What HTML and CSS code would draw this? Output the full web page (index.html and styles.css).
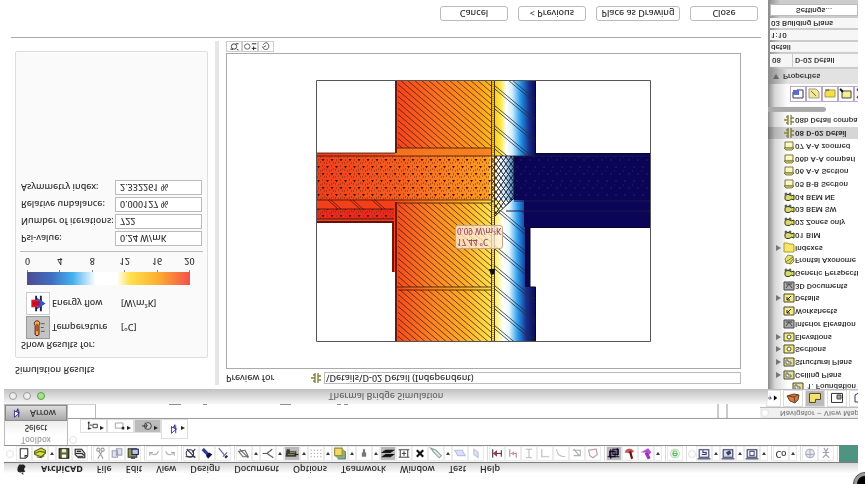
FILE: index.html
```html
<!DOCTYPE html>
<html lang="en">

<head>
    <meta charset="UTF-8">
    <meta name="viewport" content="width=device-width, initial-scale=1.0">
    <title>Thermal Bridge Simulation</title>
    <link rel="stylesheet" href="styles.css">
</head>

<body>
    <!-- Shared icons -->
    <svg class="defs" width="0" height="0" aria-hidden="true">
        <symbol id="i-new" viewBox="0 0 14 14"><path d="M3.5 2.5h5l2 2v7h-7z" fill="#fff" stroke="#333"/><path d="M8 3v2h2" fill="none" stroke="#333"/></symbol>
        <symbol id="i-open" viewBox="0 0 14 14"><path d="M2 6l6-2 4 3v3l-4 2-6-3z" fill="#d9e04a" stroke="#555b10"/><path d="M2 7l5 2 5-1M4 4l4-1 3 2" stroke="#55600c" fill="none"/></symbol>
        <symbol id="i-save" viewBox="0 0 14 14"><path d="M2.5 2.5h9v9h-9z" fill="#65652a" stroke="#111"/><path d="M5 3h4v3H5z" fill="#fff"/><path d="M5 8h4v3H5z" fill="#eee"/></symbol>
        <symbol id="i-print" viewBox="0 0 14 14"><path d="M2.5 6l3-3h6v4l-3 4h-6z" fill="#ddd" stroke="#222"/><path d="M3 7h6l2-2M5 4h5M4 9h4" stroke="#222" fill="none"/></symbol>
        <symbol id="i-cut" viewBox="0 0 14 14"><path d="M4 2l4 7M9 2L5 9" stroke="#999" fill="none"/><circle cx="4.500" cy="10.500" r="1.500" fill="none" stroke="#999"/><circle cx="8.500" cy="10.500" r="1.500" fill="none" stroke="#999"/></symbol>
        <symbol id="i-copy" viewBox="0 0 14 14"><path d="M2.500 3.500h5v6h-5zM6.500 5.500h5v6h-5z" fill="#dfe2ee" stroke="#9a9fb5"/></symbol>
        <symbol id="i-paste" viewBox="0 0 14 14"><path d="M2.500 3.500h8v8h-8z" fill="#8e9a3a" stroke="#334"/><path d="M6 6h6v5H6z" fill="#b9c8e8" stroke="#225"/><path d="M5 2h4v2H5z" fill="#444"/></symbol>
        <symbol id="i-undo" viewBox="0 0 14 14"><path d="M3 5v3h3M3 8c2-3 7-3 8 1" stroke="#aaa" fill="none"/></symbol>
        <symbol id="i-redo" viewBox="0 0 14 14"><path d="M11 5v3H8M11 8C9 5 4 5 3 9" stroke="#aaa" fill="none"/></symbol>
        <symbol id="i-find" viewBox="0 0 14 14"><circle cx="6" cy="7" r="3.500" fill="none" stroke="#335"/><path d="M3 11l8-8M2 4h9M8 8l3 3" stroke="#223" fill="none"/></symbol>
        <symbol id="i-pick" viewBox="0 0 14 14"><path d="M3 11l5-5" stroke="#2b3b9a" stroke-width="3"/><path d="M8 2l4 4-3 2-3-3z" fill="#101040"/></symbol>
        <symbol id="i-inject" viewBox="0 0 14 14"><path d="M3 12l5-6M7 4l4 4" stroke="#55608f" fill="none"/><path d="M9 3l2 2" stroke="#223" stroke-width="2"/></symbol>
        <symbol id="i-plane" viewBox="0 0 14 14"><path d="M2 9l4-5h5l-3 6zM3 11l8-8" fill="none" stroke="#666"/></symbol>
        <symbol id="i-angle" viewBox="0 0 14 14"><path d="M2 7h4l6-4M6 7l5 4" stroke="#555" fill="none"/></symbol>
        <symbol id="i-layers" viewBox="0 0 14 14"><path d="M1 4h10v5H5v2H2z" fill="#3b3b30"/><path d="M3 6h6M5 8h5" stroke="#8c8c60"/><path d="M10 6h3" stroke="#111"/></symbol>
        <symbol id="i-grid" viewBox="0 0 14 14"><path d="M2 4h10M2 7h10M2 10h10" stroke="#999" stroke-dasharray="1 2"/></symbol>
        <symbol id="i-cube" viewBox="0 0 14 14"><path d="M2 5l3-3h7v7l-3 3H2z" fill="#8fb36b"/><path d="M2 5h7v7H2z" fill="#f0d96a" stroke="#9c8a3a"/><path d="M5 2h7v7" fill="none" stroke="#4b7dab"/></symbol>
        <symbol id="i-pin" viewBox="0 0 14 14"><path d="M5 4h4v4H8v3H6V8H5z" fill="#777"/></symbol>
        <symbol id="i-stack" viewBox="0 0 14 14"><path d="M2 4h7l3 2H5zM2 8h7l3 2H5z" fill="#111" stroke="#111"/></symbol>
        <symbol id="i-box" viewBox="0 0 14 14"><path d="M2 3.500h10M2 10.500h10M3.500 3v8M10.500 3v8M7 5v4M5 7h4" stroke="#444" fill="none"/></symbol>
        <symbol id="i-x" viewBox="0 0 14 14"><path d="M4 4l6 6M10 4l-6 6" stroke="#111" stroke-width="2"/></symbol>
        <symbol id="i-pen" viewBox="0 0 14 14"><path d="M2 12l3-4 5-5 2 2-5 5z" fill="#e7efe7" stroke="#8b9f9b"/></symbol>
        <symbol id="i-para" viewBox="0 0 14 14"><path d="M2 10l3-5h7l-3 5z" fill="#dce1f6" stroke="#b6bfe3"/></symbol>
        <symbol id="i-slab" viewBox="0 0 14 14"><path d="M5 11V6l4-3v5z" fill="#dce1f6" stroke="#b6bfe3"/></symbol>
        <symbol id="i-split" viewBox="0 0 14 14"><path d="M3 3v8M6 7h5M11 4v6" stroke="#334" fill="none"/><path d="M3 7l4-3v6z" fill="#a34"/></symbol>
        <symbol id="i-adjust" viewBox="0 0 14 14"><path d="M4 11V4M5 7h5M10 3v5" stroke="#a88" fill="none"/><path d="M5 7l3-2v4z" fill="#c99"/></symbol>
        <symbol id="i-beam" viewBox="0 0 14 14"><path d="M4 3h6M4 11h6M7 3v8" stroke="#bbb" fill="none"/></symbol>
        <symbol id="i-ell" viewBox="0 0 14 14"><path d="M4 11V4h7" stroke="#bbb" fill="none"/></symbol>
        <symbol id="i-curve" viewBox="0 0 14 14"><path d="M3 11c0-5 3-7 8-7" stroke="#bbb" fill="none"/></symbol>
        <symbol id="i-flag" viewBox="0 0 14 14"><path d="M3 10h7V5H4M9 5L4 11" stroke="#aaa" fill="none"/></symbol>
        <symbol id="i-poly" viewBox="0 0 14 14"><path d="M3 10l1-5 3-2 4 3-1 5z" stroke="#b99" fill="none"/></symbol>
        <symbol id="i-group" viewBox="0 0 14 14"><path d="M3 4h5v5H3zM6 6h5v5H6z" fill="#99a" stroke="#102"/><path d="M1 4h11M4 2v9M10 5v7" stroke="#102"/></symbol>
        <symbol id="i-wand" viewBox="0 0 14 14"><path d="M2 8c2 5 6 4 9 1L8 7z" fill="#c05a5a"/><path d="M7 9l2-7" stroke="#611" stroke-width="2"/></symbol>
        <symbol id="i-trace" viewBox="0 0 14 14"><path d="M2 8h7V5l3 3-3 4z" fill="#b44ad8"/><path d="M7 8l3-6" stroke="#93b" stroke-width="3"/></symbol>
        <symbol id="i-eco" viewBox="0 0 14 14"><circle cx="7" cy="7" r="4" fill="none" stroke="#b7dcb0"/><path d="M5 7h4c0-3-4-3-4 0s3 3 4 1" fill="none" stroke="#58b558"/></symbol>
        <symbol id="i-view" viewBox="0 0 14 14"><path d="M2.500 3.500h9v7h-9z" fill="#eef" stroke="#336"/><path d="M1 2h12" stroke="#225"/><path d="M5 6h4v2H6v2" fill="none" stroke="#336"/></symbol>
        <symbol id="i-view3d" viewBox="0 0 14 14"><path d="M2.500 3.500h9v7h-9z" fill="#dde" stroke="#336"/><path d="M1 2h12" stroke="#225"/><path d="M5 8l2-3 3 2-1 3z" fill="#345"/></symbol>
        <symbol id="i-layout" viewBox="0 0 14 14"><path d="M2.500 3.500h9v7h-9z" fill="#eef" stroke="#336"/><path d="M1 2h12" stroke="#225"/><path d="M5 5h4v4H5z" fill="#fff" stroke="#556"/></symbol>
        <symbol id="i-globe" viewBox="0 0 14 14"><circle cx="7" cy="7" r="4" fill="#e7e7ef" stroke="#aab"/><path d="M3 6h8M7 3v8" stroke="#aab"/></symbol>
        <symbol id="i-walk" viewBox="0 0 14 14"><path d="M4 3l3 3 3-3M7 5v4M4 8h6M5 12l2-3 2 3" stroke="#99a" fill="none"/></symbol>
        <symbol id="i-arrow" viewBox="0 0 14 14"><path d="M4 2l6 5-3 1 1 4-2-4-2 2z" fill="#fff" stroke="#228"/><path d="M9 2v9" stroke="#228"/></symbol>
        <symbol id="i-node" viewBox="0 0 14 14"><path d="M2 11V4h3M3 8h3M7 5h5v4H7z" stroke="#222" fill="none"/><path d="M1 3h2v2H1zM1 10h2v2H1z" fill="#222"/></symbol>
        <symbol id="i-rect" viewBox="0 0 14 14"><path d="M1.500 4.500h9v6h-9z" stroke="#999" fill="none"/><path d="M9 3h3v3H9z" fill="#222"/></symbol>
        <symbol id="i-loop" viewBox="0 0 14 14"><circle cx="8" cy="7" r="4" fill="#ccc" stroke="#333"/><path d="M1 7h6l-2-3M8 7l-3 3" stroke="#222" fill="none"/></symbol>
        <!-- navigator icons -->
        <symbol id="n-fold" viewBox="0 0 12 12"><path d="M1 2h10v8H1z" fill="#e5df9a" stroke="#4b4b28"/><path d="M3 8V4h5v2H5v2z" fill="#fff" stroke="#666"/></symbol>
        <symbol id="n-sec" viewBox="0 0 12 12"><path d="M1 2h10v8H1z" fill="#f3ec86" stroke="#4b4b28"/><circle cx="6" cy="6" r="2" fill="#fff" stroke="#554"/></symbol>
        <symbol id="n-int" viewBox="0 0 12 12"><path d="M1 2h10v8H1z" fill="#aaa" stroke="#444"/><path d="M3 4l3 4 3-4M3 8h6" stroke="#444" fill="none"/></symbol>
        <symbol id="n-work" viewBox="0 0 12 12"><path d="M1 2h10v8H1z" fill="#f3ec86" stroke="#4b4b28"/><path d="M4 4l4 4M4 7V4h3" stroke="#222" fill="none"/></symbol>
        <symbol id="n-cam" viewBox="0 0 12 12"><path d="M2 4c0-2 6-2 6 0l3-1v5L8 7c0 2-6 2-6 0z" fill="#d9d96c" stroke="#333a10"/><circle cx="3" cy="9" r="1" fill="#eee" stroke="#333"/><circle cx="7" cy="9" r="1" fill="#eee" stroke="#333"/></symbol>
        <symbol id="n-axo" viewBox="0 0 12 12"><path d="M3 3l5-1 3 3-1 5-5 1-3-4z" fill="#e7e46c" stroke="#8a8a40"/><path d="M3 4l7 5M6 2l4 5" stroke="#77743a"/></symbol>
        <symbol id="n-idx" viewBox="0 0 12 12"><path d="M1 2h10v7l-1 1H6l-1 1H1z" fill="#f7e66e" stroke="#b19c28"/></symbol>
        <symbol id="n-board" viewBox="0 0 12 12"><path d="M2 4h8v6H2z" fill="#fbf8c8" stroke="#77743a"/><path d="M1 4l2-2h6l2 2z" fill="#e8e27a" stroke="#77743a"/></symbol>
        <symbol id="n-det" viewBox="0 0 12 12"><path d="M5 1v10M8 1v10" stroke="#55550e"/><path d="M1 6h4M5 9H3M5 3H3M8 4h3M8 8h3" stroke="#85802a" fill="none" stroke-width="1.500"/></symbol>
    </svg>

    <!-- The whole desktop is shown turned over top to bottom -->
    <div class="screen">
        <header class="menubar">
            <svg class="apple" viewBox="0 0 12 12"><path d="M6 3.200C5 2.600 1.500 2.400 1.500 6c0 3 2 5.500 3.200 5.500.6 0 .8-.4 1.500-.4s1 .4 1.600.4c1 0 2-1.500 2.600-2.800C8.500 8 8.300 5 10.200 4.200 9 2.500 7 2.800 6 3.200zM6 2.800C6 1.500 7 .5 8.200.4 8.300 1.800 7.200 2.800 6 2.800z" fill="#222"/></svg>
            <nav class="menu">
                <a href="#" class="app-name">ArchiCAD</a>
                <a href="#">File</a>
                <a href="#">Edit</a>
                <a href="#">View</a>
                <a href="#">Design</a>
                <a href="#">Document</a>
                <a href="#">Options</a>
                <a href="#">Teamwork</a>
                <a href="#">Window</a>
                <a href="#">Test</a>
                <a href="#">Help</a>
            </nav>
        </header>

        <div class="toolbar">
            <i class="grip"></i>
            <div class="group">
                <button><svg><use href="#i-new"/></svg></button>
                <button><svg><use href="#i-open"/></svg></button><button class="more"></button>
                <button><svg><use href="#i-save"/></svg></button>
                <button><svg><use href="#i-print"/></svg></button>
            </div>
            <div class="group">
                <button><svg><use href="#i-cut"/></svg></button>
                <button><svg><use href="#i-copy"/></svg></button>
                <button><svg><use href="#i-paste"/></svg></button>
            </div>
            <div class="group">
                <button><svg><use href="#i-undo"/></svg></button>
                <button><svg><use href="#i-redo"/></svg></button>
            </div>
            <div class="group">
                <button><svg><use href="#i-find"/></svg></button>
                <button><svg><use href="#i-pick"/></svg></button>
                <button><svg><use href="#i-inject"/></svg></button>
            </div>
            <div class="group">
                <button><svg><use href="#i-plane"/></svg></button><button class="more"></button>
                <button><svg><use href="#i-angle"/></svg></button><button class="more"></button>
                <button class="on"><svg><use href="#i-layers"/></svg></button><button class="more"></button>
                <button><svg><use href="#i-grid"/></svg></button><button class="more"></button>
                <button><svg><use href="#i-cube"/></svg></button><button class="more"></button>
                <button><svg><use href="#i-pin"/></svg></button><button class="more"></button>
                <button class="on"><svg><use href="#i-stack"/></svg></button>
                <button><svg><use href="#i-box"/></svg></button>
                <button><svg><use href="#i-x"/></svg></button>
                <button><svg><use href="#i-pen"/></svg></button><button class="more"></button>
                <button><svg><use href="#i-para"/></svg></button>
                <button><svg><use href="#i-slab"/></svg></button>
            </div>
            <div class="group">
                <button><svg><use href="#i-split"/></svg></button>
                <button><svg><use href="#i-adjust"/></svg></button>
                <button><svg><use href="#i-beam"/></svg></button>
                <button><svg><use href="#i-ell"/></svg></button>
                <button><svg><use href="#i-curve"/></svg></button>
                <button><svg><use href="#i-flag"/></svg></button>
                <button><svg><use href="#i-poly"/></svg></button>
            </div>
            <div class="group">
                <button class="on"><svg><use href="#i-group"/></svg></button>
                <button><svg><use href="#i-wand"/></svg></button>
                <button><svg><use href="#i-trace"/></svg></button><button class="more"></button>
            </div>
            <div class="group">
                <button><svg><use href="#i-eco"/></svg></button>
            </div>
            <i class="grip"></i>
            <div class="group">
                <button><svg><use href="#i-view"/></svg></button><button class="more"></button>
                <button><svg><use href="#i-view3d"/></svg></button><button class="more"></button>
                <button><svg><use href="#i-layout"/></svg></button><button class="more"></button>
            </div>
            <div class="group">
                <button class="go">Co</button><button class="more"></button>
            </div>
            <div class="group">
                <button><svg><use href="#i-globe"/></svg></button>
                <button><svg><use href="#i-walk"/></svg></button>
            </div>
            <div class="wallpaper"></div>
        </div>

        <main class="desktop">
            <div class="palettes">
                <section class="toolbox">
                    <h2>Toolbox</h2>
                    <button class="tool">Select</button>
                    <button class="tool active"><svg><use href="#i-arrow"/></svg>Arrow</button>
                </section>
                <div class="document">
                    <div class="infobox">
                        <i class="grip"></i>
                        <div class="methods">
                            <button><svg><use href="#i-node"/></svg></button>
                            <button><svg><use href="#i-rect"/></svg></button>
                            <button class="on"><svg><use href="#i-loop"/></svg></button>
                            <button class="current"><svg><use href="#i-arrow"/></svg></button>
                        </div>
                    </div>
                    <div class="sheet">
                        <span class="sheet-tab"></span>
                        <span class="sheet-scroll"></span>
                    </div>
                </div>
            </div>

            <section class="dialog">
                <header class="titlebar">
                    <div class="lights"><i></i><i></i><i class="green"></i></div>
                    <h1>Thermal Bridge Simulation</h1>
                </header>

                <div class="dialog-body">
                    <div class="results">
                        <h2>Simulation Results</h2>
                        <div class="panel">
                            <p>Show Results for:</p>
                            <div class="mode">
                                <button id="temperature" class="pressed">
                                    <svg viewBox="0 0 22 22"><path d="M8 4c0-2 4-2 4 0v9c2 3 0 5-2 5s-4-2-2-5z" fill="#f3b04a" stroke="#411"/><path d="M10 7v8" stroke="#b5501c" stroke-width="2"/><path d="M14 7h4M14 11h3M14 15h4" stroke="#555"/></svg>
                                </button>
                                <label for="temperature">Temperature</label>
                                <span>[°C]</span>
                            </div>
                            <div class="mode">
                                <button id="energy">
                                    <svg viewBox="0 0 22 22"><path d="M9 3v16M14 3v16" stroke="#224" stroke-width="2"/><path d="M4 7h6v8H4z" fill="#e01830"/><path d="M10 5l9 6-9 6z" fill="#3a4fc0"/><path d="M5 11h8" stroke="#c01028" stroke-width="4"/></svg>
                                </button>
                                <label for="energy">Energy flow</label>
                                <span>[W/m²K]</span>
                            </div>
                            <div class="scale"></div>
                            <ul class="ticks">
                                <li>0</li>
                                <li>4</li>
                                <li>8</li>
                                <li>12</li>
                                <li>16</li>
                                <li>20</li>
                            </ul>
                            <div class="values">
                                <label for="psi">Psi-value:</label>
                                <input id="psi" type="text" value="0.24 W/mK">
                                <label for="iterations">Number of iterations:</label>
                                <input id="iterations" type="text" value="722">
                                <label for="unbalance">Relative unbalance:</label>
                                <input id="unbalance" type="text" value="0.000127 %">
                                <label for="asymmetry">Asymmetry index:</label>
                                <input id="asymmetry" type="text" value="2.332261 %">
                            </div>
                        </div>
                    </div>

                    <div class="splitter"></div>

                    <div class="preview">
                        <div class="source">
                            <label for="source">Preview for</label>
                            <svg><use href="#n-det"/></svg>
                            <input id="source" type="text" value="\Details\D-02 Detail (Independent)">
                        </div>
                        <div class="canvas">
                            <div class="drawing">
                                <svg width="335" height="262" viewBox="0 0 335 262">
                                    <defs>
                                        <linearGradient id="upper" gradientUnits="userSpaceOnUse" x1="79" y1="0" x2="220" y2="0">
                                            <stop offset="0" stop-color="#f5401c"/><stop offset=".3" stop-color="#fc7220"/><stop offset=".6" stop-color="#fba01e"/><stop offset=".7" stop-color="#fdc41c"/><stop offset=".75" stop-color="#ffe84a"/><stop offset=".79" stop-color="#fff"/><stop offset=".83" stop-color="#d2f0ff"/><stop offset=".89" stop-color="#2596e8"/><stop offset=".95" stop-color="#17308c"/><stop offset="1" stop-color="#0c0850"/>
                                        </linearGradient>
                                        <linearGradient id="lower" gradientUnits="userSpaceOnUse" x1="79" y1="0" x2="220" y2="0">
                                            <stop offset="0" stop-color="#f4481c"/><stop offset=".25" stop-color="#fb8024"/><stop offset=".5" stop-color="#fbb028"/><stop offset=".66" stop-color="#fbdd48"/><stop offset=".72" stop-color="#fdf07c"/><stop offset=".77" stop-color="#fff"/><stop offset=".81" stop-color="#e4f8ff"/><stop offset=".87" stop-color="#2a9cec"/><stop offset=".93" stop-color="#17308c"/><stop offset="1" stop-color="#0c0850"/>
                                        </linearGradient>
                                        <linearGradient id="slab" gradientUnits="userSpaceOnUse" x1="0" y1="0" x2="215" y2="0">
                                            <stop offset="0" stop-color="#ee3d1e"/><stop offset=".35" stop-color="#f65a20"/><stop offset=".65" stop-color="#fb8622"/><stop offset=".8" stop-color="#fa9c20"/><stop offset=".82" stop-color="#ffe06a"/><stop offset=".85" stop-color="#fff"/><stop offset=".88" stop-color="#cdeafa"/><stop offset=".92" stop-color="#3a7ab8"/><stop offset="1" stop-color="#0b0650"/>
                                        </linearGradient>
                                        <pattern id="brick" width="7" height="6" patternUnits="userSpaceOnUse"><path d="M-1-.860L8 6.860M-8-.860L1 6.860M6-.860L15 6.860" stroke="#4a1a08" stroke-width=".9" opacity=".85"/></pattern>
                                        <pattern id="wool" width="24" height="20" patternUnits="userSpaceOnUse"><path d="M-24-20L48 40M-20-20L52 40M-44-20L28 40" stroke="#222840" stroke-width=".8"/></pattern>
                                        <pattern id="concrete" width="9" height="14" patternUnits="userSpaceOnUse"><path d="M1 2h3L2.500 4.500zM5.500 9h3L7 11.500z" fill="#411208"/><path d="M6 2h1M8 5h1M4 7h1M1 6h1M2 10h1M4 12h1M8 13h1M1 13h1M6 6h1" stroke="#7a2a0a"/></pattern>
                                        <pattern id="dark" width="9" height="14" patternUnits="userSpaceOnUse"><path d="M2 3h2M6 10h2M1 7h1" stroke="#23206e"/></pattern>
                                        <pattern id="mesh" width="5" height="7" patternUnits="userSpaceOnUse"><path d="M0 0l5 7M5 0L0 7" stroke="#16182c"/></pattern>
                                    </defs>
                                    <g transform="translate(0 262) scale(1 -1)">
                                        <path d="M0 0h335v262H0z" fill="#fff"/>
                                        <!-- wall above and below the slab -->
                                        <path d="M79 0h141v78H79z" fill="url(#upper)"/>
                                        <path d="M76 118h138v89h6v55H79v-70h-3z" fill="url(#lower)"/>
                                        <path d="M82 0h94v68H82zM82 123h94v84H82zM82 210h94v52H82z" fill="url(#brick)"/>
                                        <path d="M179 0h41v76h-41zM179 131h33v76h-33zM179 207h41v55h-41z" fill="url(#wool)"/>
                                        <!-- floor slab -->
                                        <path d="M0 73h179v47H0z" fill="url(#slab)"/>
                                        <path d="M79 68h97v8H79z" fill="#f57a22" opacity=".8"/>
                                        <path d="M0 76h175v44H0z" fill="url(#concrete)"/>
                                        <path d="M0 120h79v22H0z" fill="#f4401a"/>
                                        <path d="M0 129h78v10H0z" fill="#ea2a1c"/>
                                        <path d="M0 129h78v10H0z" fill="url(#concrete)"/>
                                        <path d="M12 120l10 9M15 120l10 9M34 120l10 9M37 120l10 9M56 120l10 9M59 120l10 9" stroke="#5a1008" stroke-width=".8"/>
                                        <!-- cold side -->
                                        <path d="M175 76h40v44h-40z" fill="url(#slab)"/>
                                        <path d="M220 73h115v74H208v-27h-10V76h22z" fill="#0b0558"/>
                                        <path d="M198 76h137v42H198z" fill="url(#dark)"/>
                                        <path d="M198 121h137M190 131h145M215 76h120" stroke="#191a4c"/>
                                        <path d="M209 147h5v60h-5z" fill="#0b0648"/>
                                        <path d="M175 76h23v42l-20 18v-14h-3z" fill="url(#mesh)"/>
                                        <path d="M198 76v42l-20 19" fill="none" stroke="#111433"/>
                                        <!-- outlines -->
                                        <path d="M0 73h79M0 76h215M79 68h97M79 207h97M82 210h94M0 120h176M79 123h97M0 129h78M0 139h78" fill="none" stroke="#3b1408" stroke-width=".8"/>
                                        <path d="M0 142h78" stroke="#611010" stroke-width="2"/>
                                        <path d="M80 0v73M77 142v50M80 122v140" stroke="#701808" stroke-width="2"/>
                                        <path d="M175.500 0v262M178.500 0v262" stroke="#4c3510"/>
                                        <path d="M177 0v262" stroke="#8b6a28" stroke-dasharray="1 1"/>
                                        <path d="M219.500 0v73.500h115M214 147.500h121M214 147v60h5.500v55" fill="none" stroke="#080530"/>
                                        <path d="M.5.500h334v261H.5z" fill="none" stroke="#555"/>
                                        <path d="M173 189h6l-1 5-3 1z" fill="#111"/>
                                    </g>
                                </svg>
                                <div class="tooltip">17.44 °C<br>0.09 W/m²K</div>
                            </div>
                        </div>
                        <div class="zoom">
                            <button><svg viewBox="0 0 14 10"><circle cx="7" cy="5" r="3" fill="none" stroke="#333"/><path d="M3 2h3M9 8h3M10 2l2-1" stroke="#222"/></svg></button>
                            <button><svg viewBox="0 0 14 10"><circle cx="4" cy="5" r="3" fill="none" stroke="#555"/><path d="M9 3h5M11 1v4M9 8h5" stroke="#111"/></svg></button>
                            <button><svg viewBox="0 0 14 10"><path d="M3 5c1-5 8-4 7 1s-5 3-6 1M7 6l-3-2" fill="none" stroke="#444"/></svg></button>
                        </div>
                    </div>
                </div>

                <footer class="actions">
                    <button>Cancel</button>
                    <button>&lt; Previous</button>
                    <button class="wide">Place as Drawing</button>
                    <button>Close</button>
                </footer>
            </section>

            <aside class="navigator">
                <h2><i class="grip"></i>Navigator – View Map</h2>
                <div class="maps">
                    <button class="small"><svg viewBox="0 0 14 14"><path d="M1 7h4M3 5l2 2-2 2" fill="none" stroke="#336"/><path d="M8 4l4 3-4 3z"/></svg></button>
                    <button><svg viewBox="0 0 14 14"><path d="M1 9l3-5 5-2 3 3 1 5-5 1z" fill="#dc7a3c" stroke="#542"/><path d="M2 9l6-1 4 2M8 8l1-5" stroke="#733" fill="none"/></svg></button>
                    <button class="on"><svg viewBox="0 0 14 14"><path d="M1.500 11.500h11v-6h-5v-3h-6z" fill="#f5e269" stroke="#543"/></svg></button>
                    <button><svg viewBox="0 0 14 14"><path d="M1.500 2.500h11v9h-11z" fill="#fff" stroke="#333"/><path d="M7 6h4v4H7z" fill="#9ab08a" stroke="#444"/></svg></button>
                    <button><svg viewBox="0 0 14 14"><path d="M3 3v7l4 2 5-2V3z" fill="#fff" stroke="#336"/></svg></button>
                </div>
                <div class="clipped"><svg><use href="#n-fold"/></svg>1. Foundation</div>
                <ul class="tree">
                    <li class="parent"><svg><use href="#n-fold"/></svg>Ceiling Plans</li>
                    <li class="parent"><svg><use href="#n-fold"/></svg>Structural Plans</li>
                    <li class="parent"><svg><use href="#n-sec"/></svg>Sections</li>
                    <li class="parent"><svg><use href="#n-sec"/></svg>Elevations</li>
                    <li><svg><use href="#n-int"/></svg>Interior Elevation</li>
                    <li><svg><use href="#n-work"/></svg>Worksheets</li>
                    <li class="parent"><svg><use href="#n-work"/></svg>Details</li>
                    <li><svg><use href="#n-int"/></svg>3D Documents</li>
                    <li><svg><use href="#n-cam"/></svg>Generic Perspecti</li>
                    <li><svg><use href="#n-axo"/></svg>Frontal Axonome</li>
                    <li class="parent"><svg><use href="#n-idx"/></svg>Indexes</li>
                    <li><svg><use href="#n-cam"/></svg>01 BIM</li>
                    <li><svg><use href="#n-cam"/></svg>02 Zones only</li>
                    <li><svg><use href="#n-cam"/></svg>03 BEM SW</li>
                    <li><svg><use href="#n-cam"/></svg>04 BEM NE</li>
                    <li><svg><use href="#n-board"/></svg>05 B-B Section</li>
                    <li><svg><use href="#n-board"/></svg>06 A-A Section</li>
                    <li><svg><use href="#n-board"/></svg>06b A-A compari</li>
                    <li><svg><use href="#n-board"/></svg>07 A-A zoomed</li>
                    <li class="selected"><svg><use href="#n-det"/></svg>08 D-02 Detail</li>
                    <li><svg><use href="#n-det"/></svg>08b Detail compa</li>
                </ul>
                <div class="scrollbar"></div>
                <div class="commands">
                    <button><svg viewBox="0 0 14 14"><path d="M2 3h10v8H6V9H2z" fill="#fff" stroke="#334"/><path d="M2 6h6v5H2z" fill="#5a6bd0"/></svg></button>
                    <button><svg viewBox="0 0 14 14"><path d="M2 3h10v6l-3 3H2z" fill="#f5ea8a" stroke="#999"/><path d="M4 10l5-5" stroke="#666"/></svg></button>
                    <button><svg viewBox="0 0 14 14"><path d="M2 4h10v7H5l-3-2z" fill="#f6df4c" stroke="#a93"/><path d="M2 11h4" stroke="#333"/></svg></button>
                    <button><svg viewBox="0 0 14 14"><path d="M3 3h9v7H3z" fill="#f5ef9a" stroke="#443"/><path d="M1 12l3-3" stroke="#111" stroke-width="2"/></svg></button>
                    <button><svg viewBox="0 0 14 14"><path d="M2 3l9 9M11 3l-9 9" stroke="#b01828" stroke-width="2"/></svg></button>
                </div>
                <div class="properties">
                    <h3>Properties</h3>
                    <div class="pair">
                        <input type="text" value="08" aria-label="View ID">
                        <input type="text" value="D-02 Detail" aria-label="View name">
                    </div>
                    <input type="text" value="detail" aria-label="Layer combination">
                    <input type="text" value="1:10" aria-label="Scale">
                    <input type="text" value="03 Building Plans" aria-label="Model view">
                    <button>Settings...</button>
                </div>
            </aside>
        </main>
        <i class="corner"></i>
    </div>
</body>

</html>
```
FILE: styles.css
```css
/* Basic reset */
* {
    margin: 0;
    padding: 0;
    box-sizing: border-box;
}

:root {
    --text: #303030;
    --line: #a9a9a9;
    --soft: #dcdcdc;
}

body {
    background: #fff;
    color: var(--text);
    font-family: "Noto Sans", "Open Sans", sans-serif;
    font-size: 9px;
    font-weight: 500;
    line-height: 12px;
    overflow: hidden;
}

button,
input {
    font: inherit;
    color: inherit;
    border: 0;
    background: none;
    min-width: 0;
}

h1,
h2,
h3 {
    font-size: inherit;
    font-weight: inherit;
}

ul {
    list-style: none;
}

svg {
    display: block;
    flex: none;
}

.defs {
    position: absolute;
}

.screen {
    position: relative;
    display: flex;
    flex-direction: column;
    height: 100vh;
    min-height: 484px;
    padding: 0 7px 0 4px;
    overflow: hidden;
    transform: scaleY(-1);
}

.corner {
    position: absolute;
    top: -11px;
    right: -11px;
    width: 22px;
    height: 22px;
    border: 3px solid #999;
    border-radius: 50%;
    background: #000;
    outline: 1px solid #444;
}

.grip {
    flex: none;
    width: 8px;
    height: 8px;
    border: 1px solid #e2e2e2;
    border-radius: 50%;
    background: #fff;
}

/* Menu bar */
.menubar {
    flex: none;
    display: flex;
    align-items: center;
    gap: 14px;
    height: 22px;
    padding: 8px 0 0 12px;
    background: linear-gradient(#fff 50%, #d6d6d6);
    border-bottom: 1px solid #777;
}

.apple {
    width: 11px;
    height: 11px;
}

.menu {
    display: flex;
    gap: 14px;
}

.menu a {
    color: #222;
    text-decoration: none;
}

.menu .app-name {
    font-weight: 700;
}

/* Toolbar */
.toolbar {
    flex: none;
    display: flex;
    align-items: center;
    height: 17px;
    border-bottom: 1px solid #888;
    background: #fff;
}

.toolbar .grip:first-child {
    margin: 0 2px;
}

.group {
    display: flex;
    padding-right: 3px;
    margin-right: 1px;
    border-right: 1px solid var(--soft);
}

.toolbar button {
    width: 16px;
    height: 15px;
    box-shadow: inset 0 0 0 1px #ebebeb;
}

.toolbar button svg {
    width: 16px;
    height: 15px;
}

.toolbar .more {
    width: 8px;
    display: flex;
    align-items: center;
    justify-content: center;
}

.more::before {
    content: "";
    border: 2px solid transparent;
    border-top: 3px solid #333;
    border-bottom: 0;
}

.toolbar .on {
    background: #bbb;
}

.toolbar .go {
    line-height: 12px;
}

.wallpaper {
    flex: 1;
    height: 17px;
    background: #4f9482;
}

/* Palettes under the toolbar */
.desktop {
    position: relative;
    flex: 1;
    display: flex;
    flex-direction: column;
}

.palettes {
    display: flex;
    height: 41px;
}

.toolbox {
    width: 64px;
    border: 1px solid #bbb;
    border-top: 0;
    font-size: 8px;
}

.toolbox h2 {
    height: 10px;
    line-height: 10px;
    color: #999;
    text-align: center;
}

.tool {
    display: flex;
    align-items: center;
    justify-content: center;
    width: 100%;
    height: 14px;
    background: linear-gradient(#fff, #eee);
}

.tool.active {
    justify-content: flex-start;
    gap: 7px;
    height: 16px;
    padding-left: 5px;
    border: 1px solid #888;
    background: linear-gradient(#aaa, #ddd);
    font-size: 9px;
}

.tool svg {
    width: 12px;
    height: 12px;
}

.document {
    flex: 1;
}

.infobox {
    display: flex;
    height: 27px;
    border-bottom: 1px solid #999;
}

.infobox .grip {
    margin: 1px 3px 0 1px;
}

.methods {
    display: flex;
    align-items: flex-end;
}

.methods button {
    position: relative;
    width: 27px;
    height: 14px;
    padding-left: 5px;
    border: 1px solid #ddd;
}

.methods .on {
    background: #bbb;
}

.methods .current {
    height: 20px;
}

.methods button svg {
    width: 14px;
    height: 12px;
}

.methods button::after {
    content: "";
    position: absolute;
    right: 2px;
    bottom: 6px;
    border: 2px solid transparent;
    border-left: 4px solid #222;
    border-right: 0;
}

.sheet {
    display: flex;
    justify-content: space-between;
    height: 14px;
    padding-right: 130px;
    background:
        linear-gradient(#888, #888) 101px 100% / 12px 1px no-repeat,
        linear-gradient(#888, #888) 135px 100% / 4px 1px no-repeat,
        linear-gradient(#888, #888) 212px 100% / 11px 1px no-repeat,
        linear-gradient(#888, #888) 269px 100% / 4px 1px no-repeat,
        linear-gradient(#888, #888) 276px 100% / 4px 1px no-repeat;
}

.sheet-tab {
    width: 28px;
    border-right: 1px solid #bbb;
    border-bottom: 1px solid #ccc;
}

.sheet-scroll {
    width: 11px;
    border: 2px solid #ccc;
    border-width: 0 2px;
}

/* Dialog */
.dialog {
    position: relative;
    z-index: 1;
    flex: 1;
    display: flex;
    flex-direction: column;
    margin-right: 90px;
    background: #fff;
}

.titlebar {
    position: relative;
    height: 15px;
    background: linear-gradient(#f6f6f6, #c2c2c2);
}

.titlebar h1 {
    line-height: 15px;
    text-align: center;
    color: #666;
}

.lights {
    position: absolute;
    top: 4px;
    left: 5px;
    display: flex;
    gap: 6px;
}

.lights i {
    width: 8px;
    height: 8px;
    border: 1px solid #999;
    border-radius: 50%;
    background: #eee;
}

.lights .green {
    border-color: #58a045;
    background: #a6df8e;
}

.dialog-body {
    flex: 1;
    display: flex;
    margin: 0 7px;
    padding: 4px 20px 3px 4px;
    border-bottom: 1px solid var(--line);
}

.results {
    display: flex;
    flex-direction: column;
    width: 193px;
    padding: 9px 0 10px;
}

.panel {
    flex: 1;
    margin-top: 6px;
    padding: 6px 4px;
    border: 1px solid #dedede;
    border-radius: 2px;
    background: #fafafb;
}

.panel p {
    padding-left: 1px;
}

.mode {
    display: flex;
    align-items: center;
    padding-left: 6px;
    margin-bottom: 1px;
}

.mode button {
    width: 24px;
    height: 23px;
    border: 1px solid #ccc;
    background: #fff;
}

.mode .pressed {
    border-color: #999;
    background: #c4c4c4;
}

.mode svg {
    width: 22px;
    height: 21px;
}

.mode label {
    width: 69px;
    margin-left: 2px;
}

.scale {
    height: 13px;
    margin: 7px 13px 0 7px;
    background: linear-gradient(90deg, #4e4b94, #3f6fc0 15%, #45b0f0 28%, #fff 42%, #fff 55%, #ffe14c 63%, #fdb030 80%, #f4504a);
}

.ticks {
    display: flex;
    justify-content: space-between;
    margin: 0 6px 0 0;
}

.ticks li {
    width: 15px;
    padding-top: 4px;
    line-height: 14px;
    text-align: center;
    background: linear-gradient(#888, #888) center top / 1px 2px no-repeat;
}

.values {
    display: grid;
    grid-template-columns: 1fr 87px;
    gap: 2px 0;
    align-items: center;
    margin-top: 2px;
    padding: 5px 1px 0;
    border-top: 1px solid #bbb;
    white-space: nowrap;
}

.values input {
    width: 87px;
    height: 15px;
    padding: 0 4px;
    border: 1px solid #bbb;
    background: #fff;
}

.splitter {
    width: 4px;
    margin: 0 7px;
    background: #e6e6e6;
}

.preview {
    flex: 1;
    display: flex;
    flex-direction: column;
}

.source {
    display: flex;
    align-items: center;
    height: 13px;
    margin-bottom: 3px;
}

.source label {
    width: 84px;
}

.source svg {
    width: 12px;
    height: 12px;
}

.source input {
    flex: 1;
    height: 12px;
    margin-left: 2px;
    padding: 0 1px;
    border: 1px solid #bbb;
}

.canvas {
    flex: 1;
    display: flex;
    align-items: center;
    justify-content: center;
    border: 1px solid #aaa;
}

.drawing {
    position: relative;
}

.tooltip {
    position: absolute;
    top: 93px;
    left: 139px;
    padding: 0 1px;
    border: 1px solid #c9a28a;
    border-radius: 3px;
    background: rgba(255, 240, 226, .75);
    color: #9a4468;
    font-size: 8px;
    line-height: 11px;
    white-space: nowrap;
}

.zoom {
    display: flex;
    margin-top: 1px;
}

.zoom button {
    width: 16px;
    height: 11px;
    border: 1px solid #ccc;
}

.zoom svg {
    width: 14px;
    height: 9px;
}

.actions {
    display: flex;
    justify-content: flex-end;
    gap: 10px;
    padding: 16px 10px 6px;
}

.actions button {
    width: 68px;
    height: 15px;
    border: 1px solid #bbb;
    border-radius: 3px;
    background: #fff;
}

.actions .wide {
    width: 84px;
}

/* Navigator */
.navigator {
    position: absolute;
    top: 27px;
    right: 0;
    bottom: 0;
    display: flex;
    flex-direction: column;
    width: 98px;
    overflow: hidden;
    /* shadow of the dialog that covers the left edge */
    background: linear-gradient(90deg, #8a8a8a 8px, #d8d8d8 15px, #fff 28px);
    font-family: Roboto, "Noto Sans", sans-serif;
    font-size: 8px;
    white-space: nowrap;
}

.navigator h2 {
    display: flex;
    align-items: center;
    gap: 11px;
    height: 10px;
    padding-left: 1px;
    background: #f0f0f0;
    color: #888;
}

.maps {
    display: flex;
    gap: 2px;
    height: 19px;
    padding-left: 6px;
    border-top: 1px solid #bbb;
    border-bottom: 1px solid #bbb;
    background: #fff;
}

.maps button {
    flex: none;
    width: 20px;
    padding: 1px 2px;
    border: 1px solid #ddd;
}

.maps .small {
    width: 15px;
    padding: 1px 0;
}

.maps .on {
    background: #bbb;
}

.maps svg {
    width: 14px;
    height: 14px;
}

.maps .small svg {
    width: 12px;
}

.clipped {
    display: flex;
    align-items: flex-end;
    gap: 3px;
    height: 8px;
    padding-left: 32px;
    overflow: hidden;
    line-height: 10px;
}

.clipped svg,
.tree svg {
    width: 12px;
    height: 12px;
}

.tree {
    flex: 1;
    display: grid;
    grid-auto-rows: 1fr;
}

.tree li {
    position: relative;
    display: flex;
    align-items: center;
    min-height: 0;
    padding-left: 23px;
    line-height: 12px;
}

.tree .parent::before {
    content: "";
    position: absolute;
    left: 16px;
    border: 3px solid transparent;
    border-left: 5px solid #777;
    border-right: 0;
}

.tree .selected {
    background: rgba(0, 0, 0, .16);
    font-weight: 700;
}

.scrollbar {
    flex: none;
    width: 66px;
    height: 5px;
    margin: 2px 0 5px;
    border-radius: 3px;
    background: #aaa;
}

.commands {
    display: flex;
    padding-left: 30px;
    margin-bottom: 2px;
}

.commands button {
    flex: none;
    width: 16px;
    height: 16px;
    border: 1px solid #b6a6c4;
}

.commands svg {
    width: 14px;
    height: 14px;
}

.properties {
    display: flex;
    flex-direction: column;
    gap: 2px;
    padding: 0 0 4px 10px;
    background: linear-gradient(90deg, #8a8a8a 8px, #ccc 20px);
}

.properties h3 {
    display: flex;
    align-items: center;
    gap: 4px;
    height: 15px;
    margin-left: -10px;
    padding-left: 13px;
    background: linear-gradient(90deg, #8a8a8a 8px, #e2e2e2 28px);
}

.properties h3::before {
    content: "";
    border: 3px solid transparent;
    border-top: 5px solid #666;
    border-bottom: 0;
}

.properties input {
    width: 100%;
    height: 10px;
    padding-left: 1px;
    background: #f6f6f6;
}

.pair {
    display: flex;
    gap: 1px;
}

.pair input {
    height: 13px;
    padding-left: 2px;
}

.pair input:first-child {
    width: 22px;
}

.pair input:last-child {
    flex: 1;
}

.properties button {
    height: 12px;
    border: 1px solid #bbb;
    background: #fff;
    line-height: 10px;
}
```
